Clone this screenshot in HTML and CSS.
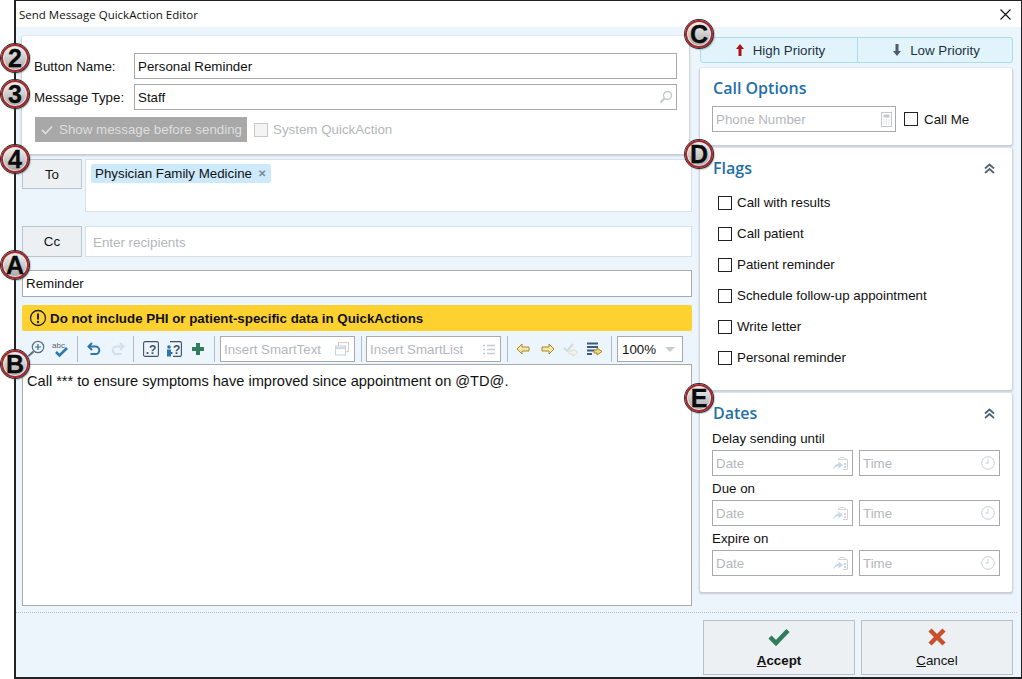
FILE: index.html

```html
<!DOCTYPE html>
<html lang="en">
<head>
    <meta charset="UTF-8">
    <title>Send Message QuickAction Editor</title>
    <link rel="stylesheet" href="styles.css">
</head>
<body>
<div class="window">
    <div class="titlebar">
        <span class="title">Send Message QuickAction Editor</span>
        <svg class="close" width="11" height="11" viewBox="0 0 11 11"><path d="M.5 .5l10 10M10.500 .5l-10 10" stroke="#111" stroke-width="1.1" fill="none"/></svg>
    </div>

    <div class="main">
        <div class="left">
            <div class="card general">
                <div class="form-row">
                    <label class="form-label">Button Name:</label>
                    <div class="input">Personal Reminder</div>
                </div>
                <div class="form-row">
                    <label class="form-label">Message Type:</label>
                    <div class="input">Staff
                        <svg class="field-icon" width="14" height="14" viewBox="0 0 14 14"><circle cx="8.5" cy="5.5" r="4" fill="none" stroke="#c4c8cc" stroke-width="1.4"/><path d="M5.5 8.5L1.5 12.5" stroke="#c4c8cc" stroke-width="2"/></svg>
                    </div>
                </div>
                <div class="options-row">
                    <div class="show-btn">
                        <svg width="12" height="10" viewBox="0 0 12 10"><path d="M1 5l3.5 3.5L11 1.5" fill="none" stroke="#dcdcdc" stroke-width="1.8"/></svg>
                        Show message before sending
                    </div>
                    <span class="check disabled"></span>
                    <span class="muted">System QuickAction</span>
                </div>
            </div>

            <div class="recipients to">
                <div class="rcp-btn">To</div>
                <div class="rcp-box">
                    <span class="chip">Physician Family Medicine <span class="chip-x">✕</span></span>
                </div>
            </div>
            <div class="recipients cc">
                <div class="rcp-btn">Cc</div>
                <div class="rcp-box placeholder">Enter recipients</div>
            </div>

            <div class="input subject">Reminder</div>

            <div class="warning">
                <svg width="18" height="18" viewBox="0 0 18 18"><circle cx="9" cy="9" r="7.5" fill="none" stroke="#222" stroke-width="1.3"/><path d="M9 4.5v6" stroke="#222" stroke-width="2"/><circle cx="9" cy="13" r="1.2" fill="#222"/></svg>
                Do not include PHI or patient-specific data in QuickActions
            </div>

            <div class="toolbar">
                <svg class="tool" width="18" height="18" viewBox="0 0 18 18"><circle cx="11" cy="7" r="5.7" fill="none" stroke="#5c6d7c" stroke-width="1.2"/><path d="M8 7h6M11 4v6" stroke="#2f6f9f" stroke-width="1.2"/><path d="M6.500 11.500L1.500 16" stroke="#5c6d7c" stroke-width="2"/></svg>
                <svg class="tool" width="17" height="17" viewBox="0 0 17 17"><text class="icon-abc" x="0" y="7">abc</text><path d="M4 11l3.500 3.500L15 7" fill="none" stroke="#2f78ad" stroke-width="2.600"/></svg>
                <span class="sep sep-a"></span>
                <svg class="tool" width="14" height="14" viewBox="0 0 14 14"><path d="M5 1L1.500 4.500 5 8" fill="none" stroke="#2a76ad" stroke-width="2"/><path d="M2 4.500h6.500a3.800 3.800 0 0 1 0 7.600H3.500" fill="none" stroke="#2a76ad" stroke-width="2"/></svg>
                <svg class="tool redo" width="14" height="14" viewBox="0 0 14 14"><path d="M9 1l3.500 3.500L9 8" fill="none" stroke="#cfe0ea" stroke-width="2"/><path d="M12 4.500H5.500a3.800 3.800 0 0 0 0 7.600H10.500" fill="none" stroke="#cfe0ea" stroke-width="2"/></svg>
                <span class="sep sep-b"></span>
                <svg class="tool" width="16" height="16" viewBox="0 0 16 16"><rect x=".6" y=".6" width="14.800" height="14.800" rx="1.500" fill="none" stroke="#3f5266" stroke-width="1.100"/><text class="icon-help" x="8" y="12.500">.?</text></svg>
                <svg class="tool" width="16" height="16" viewBox="0 0 16 16"><path d="M4 .6h10a1.500 1.500 0 0 1 1.400 1.500v11.800a1.500 1.500 0 0 1-1.400 1.500H7" fill="none" stroke="#3f5266" stroke-width="1.100"/><text class="icon-help" x="9" y="12.500">.?</text><circle cx="3" cy="6" r="1.800" fill="#2a76ad"/><rect x="1" y="8.500" width="4" height="7" fill="#2a76ad"/></svg>
                <svg class="tool plus" width="12" height="12" viewBox="0 0 12 12"><path d="M4 0h4v4h4v4H8v4H4V8H0V4h4z" fill="#2f7d5b"/></svg>
                <span class="sep sep-c"></span>
                <div class="tool-field smarttext">
                    <span class="muted">Insert SmartText</span>
                    <svg width="14" height="14" viewBox="0 0 14 14"><rect x="3.500" y=".6" width="10" height="9" fill="none" stroke="#e2c9bd"/><rect x=".6" y="4" width="10" height="9" fill="#fff" stroke="#bcd0e0"/><path d="M1 6h9" stroke="#bcd0e0" stroke-width="1.500"/></svg>
                </div>
                <span class="sep sep-d"></span>
                <div class="tool-field smartlist">
                    <span class="muted">Insert SmartList</span>
                    <svg width="12" height="11" viewBox="0 0 12 11"><path d="M0 1.500h2M4 1.500h8M0 5.500h2M4 5.500h8M0 9.500h2M4 9.500h8" stroke="#c6ccd2" stroke-width="1.500"/></svg>
                </div>
                <span class="sep sep-e"></span>
                <svg class="tool back" width="14" height="12" viewBox="0 0 14 12"><path d="M6 1L1 6l5 5V8h7V4H6z" fill="#f5e6a8" stroke="#a8892c"/></svg>
                <svg class="tool nav" width="14" height="12" viewBox="0 0 14 12"><path d="M8 1l5 5-5 5V8H1V4h7z" fill="#f5e6a8" stroke="#a8892c"/></svg>
                <svg class="tool nav" width="16" height="15" viewBox="0 0 16 15"><path d="M1 6l3 3 6-7" fill="none" stroke="#cfe0dc" stroke-width="2.200"/><path d="M10 7l4.500 3.500L10 14v-2H6V9h4z" fill="#f7f5ea" stroke="#dcdcd0"/></svg>
                <svg class="tool" width="16" height="15" viewBox="0 0 16 15"><path d="M0 1.500h11M0 5h11M0 8.500h8M0 12h5" stroke="#3c5a7c" stroke-width="2"/><path d="M10 6l5 3.500-5 3.500v-2H7V8h3z" fill="#f0d878" stroke="#a8892c"/></svg>
                <span class="sep sep-f"></span>
                <div class="tool-field zoom">
                    <span>100%</span>
                    <svg width="10" height="5" viewBox="0 0 10 5"><path d="M0 0h10L5 5z" fill="#c8ccd0"/></svg>
                </div>
            </div>

            <div class="editor">Call *** to ensure symptoms have improved since appointment on @TD@.</div>
        </div>

        <div class="right">
            <div class="priority">
                <div class="prio-btn">
                    <svg width="8" height="12" viewBox="0 0 8 12"><path d="M4 0l4 5H5.500v7h-3V5H0z" fill="#b01116"/></svg>
                    High Priority
                </div>
                <div class="prio-btn">
                    <svg width="8" height="12" viewBox="0 0 8 12"><path d="M4 12l4-5H5.500V0h-3v7H0z" fill="#4c5c6c"/></svg>
                    Low Priority
                </div>
            </div>

            <div class="card side call-options">
                <h2 class="side-title">Call Options</h2>
                <div class="call-row">
                    <div class="input phone"><span class="muted">Phone Number</span>
                        <svg class="field-icon" width="11" height="15" viewBox="0 0 11 15"><rect x=".5" y=".5" width="10" height="14" fill="none" stroke="#c4c8cc"/><rect x="2.500" y="2.500" width="6" height="3" fill="#c4c8cc"/><path d="M2.500 8h1M5 8h1M7.500 8h1M2.500 10h1M5 10h1M7.500 10h1M2.500 12h1M5 12h1M7.500 12h1" stroke="#c4c8cc"/></svg>
                    </div>
                    <span class="check"></span>
                    <span>Call Me</span>
                </div>
            </div>

            <div class="card side flags">
                <div class="side-head">
                    <h2 class="side-title">Flags</h2>
                    <svg width="11" height="11" viewBox="0 0 11 11"><path d="M1 5.500l4.500-4 4.500 4M1 10l4.500-4 4.500 4" fill="none" stroke="#4f6478" stroke-width="1.700"/></svg>
                </div>
                <div class="flag"><span class="check"></span>Call with results</div>
                <div class="flag"><span class="check"></span>Call patient</div>
                <div class="flag"><span class="check"></span>Patient reminder</div>
                <div class="flag"><span class="check"></span>Schedule follow-up appointment</div>
                <div class="flag"><span class="check"></span>Write letter</div>
                <div class="flag"><span class="check"></span>Personal reminder</div>
            </div>

            <div class="card side dates">
                <div class="side-head">
                    <h2 class="side-title">Dates</h2>
                    <svg width="11" height="11" viewBox="0 0 11 11"><path d="M1 5.500l4.500-4 4.500 4M1 10l4.500-4 4.500 4" fill="none" stroke="#4f6478" stroke-width="1.700"/></svg>
                </div>
                <div class="date-label">Delay sending until</div>
                <div class="date-row">
                    <div class="input date"><span class="muted">Date</span>
                        <svg class="field-icon" width="15" height="14" viewBox="0 0 15 14"><path d="M5 3.500h9.500v10H10M6 1.500v2M12 1.500v2M7 1.500h4" fill="none" stroke="#cfd3d6"/><path d="M11 7h2v2h-2zM11 10h2v2h-2z" fill="#cfd3d6"/><path d="M.5 13.500c0-3.500 2.500-5.500 5-5.500V5.500L10 9l-4.500 3.500V10c-2 0-3.500 1-5 3.500z" fill="#c6d8ea"/></svg>
                    </div>
                    <div class="input time"><span class="muted">Time</span>
                        <svg class="field-icon" width="14" height="14" viewBox="0 0 14 14"><circle cx="7" cy="7" r="6.300" fill="none" stroke="#c8ced2"/><path d="M7 3v4H4.500" fill="none" stroke="#c8ced2"/></svg>
                    </div>
                </div>
                <div class="date-label">Due on</div>
                <div class="date-row">
                    <div class="input date"><span class="muted">Date</span>
                        <svg class="field-icon" width="15" height="14" viewBox="0 0 15 14"><path d="M5 3.500h9.500v10H10M6 1.500v2M12 1.500v2M7 1.500h4" fill="none" stroke="#cfd3d6"/><path d="M11 7h2v2h-2zM11 10h2v2h-2z" fill="#cfd3d6"/><path d="M.5 13.500c0-3.500 2.500-5.500 5-5.500V5.500L10 9l-4.500 3.500V10c-2 0-3.500 1-5 3.500z" fill="#c6d8ea"/></svg>
                    </div>
                    <div class="input time"><span class="muted">Time</span>
                        <svg class="field-icon" width="14" height="14" viewBox="0 0 14 14"><circle cx="7" cy="7" r="6.300" fill="none" stroke="#c8ced2"/><path d="M7 3v4H4.500" fill="none" stroke="#c8ced2"/></svg>
                    </div>
                </div>
                <div class="date-label">Expire on</div>
                <div class="date-row">
                    <div class="input date"><span class="muted">Date</span>
                        <svg class="field-icon" width="15" height="14" viewBox="0 0 15 14"><path d="M5 3.500h9.500v10H10M6 1.500v2M12 1.500v2M7 1.500h4" fill="none" stroke="#cfd3d6"/><path d="M11 7h2v2h-2zM11 10h2v2h-2z" fill="#cfd3d6"/><path d="M.5 13.500c0-3.500 2.500-5.500 5-5.500V5.500L10 9l-4.500 3.500V10c-2 0-3.500 1-5 3.500z" fill="#c6d8ea"/></svg>
                    </div>
                    <div class="input time"><span class="muted">Time</span>
                        <svg class="field-icon" width="14" height="14" viewBox="0 0 14 14"><circle cx="7" cy="7" r="6.300" fill="none" stroke="#c8ced2"/><path d="M7 3v4H4.500" fill="none" stroke="#c8ced2"/></svg>
                    </div>
                </div>
            </div>
        </div>
    </div>

    <div class="footer">
        <div class="foot-btn accept">
            <svg width="22" height="18" viewBox="0 0 22 18"><path d="M2 9l6 6L20 2.500" fill="none" stroke="#2f7d5b" stroke-width="4.500"/></svg>
            <span><u>A</u>ccept</span>
        </div>
        <div class="foot-btn">
            <svg width="18" height="18" viewBox="0 0 18 18"><path d="M2 2l14 14M16 2L2 16" fill="none" stroke="#c9502f" stroke-width="4.500"/></svg>
            <span><u>C</u>ancel</span>
        </div>
    </div>
</div>

<span class="badge badge-2">2</span>
<span class="badge badge-3">3</span>
<span class="badge badge-4">4</span>
<span class="badge badge-a">A</span>
<span class="badge badge-b">B</span>
<span class="badge badge-c">C</span>
<span class="badge badge-d">D</span>
<span class="badge badge-e">E</span>
</body>
</html>
```

FILE: styles.css

```css
* {
    box-sizing: border-box;
}
body {
    font-family: "Liberation Sans", Arial, sans-serif;
    font-size: 13.33px;
    color: #111;
    background-color: #fff;
    margin: 0;
    padding: 0;
    height: 679px;
    overflow: hidden;
    position: relative;
}
svg {
    flex: none;
    display: block;
}

.window {
    margin-left: 14px;
    width: 1008px;
    height: 679px;
    border: 2px solid #222;
    border-top-width: 1px;
    border-right-width: 1px;
    background-color: #ecf4fc;
    display: flex;
    flex-direction: column;
}
.titlebar {
    height: 26px;
    background-color: #fff;
    display: flex;
    align-items: center;
    justify-content: space-between;
    padding: 0 3px 0 3px;
    flex: none;
}
.title {
    font-family: "Open Sans", sans-serif;
    font-size: 11.5px;
}
.close {
    margin-right: 7px;
}

.main {
    flex: none;
    height: 586px;
    display: flex;
    padding: 0 0 6px 6px;
    margin-right: 4px;
    border-bottom: 1px dotted #b5bcc4;
}
.left {
    width: 670px;
    display: flex;
    flex-direction: column;
    padding-top: 9px;
}
.right {
    width: 313px;
    margin-left: 8px;
    padding-top: 10px;
}

.card {
    background-color: #fff;
    box-shadow: 0 1px 2px 1px #c6ccd4;
    border-radius: 2px;
}
.general {
    width: 667px;
    height: 118px;
    flex: none;
    padding: 17px 12px 0;
}
.form-row {
    display: flex;
    align-items: center;
    margin-bottom: 5px;
}
.form-label {
    width: 100px;
}
.input {
    background-color: #fff;
    border: 1px solid #a9a9a9;
    height: 26px;
    padding: 0 3px;
    display: flex;
    align-items: center;
    justify-content: space-between;
    flex: 1;
    position: relative;
}
.muted {
    color: #b4b7bb;
}
.options-row {
    display: flex;
    align-items: center;
    margin-top: 7px;
}
.show-btn {
    width: 212px;
    height: 25px;
    background-color: #a8a8a8;
    color: #dedede;
    display: flex;
    align-items: center;
    gap: 6px;
    padding-left: 6px;
    margin-right: 7px;
    margin-left: 1px;
}
.check {
    width: 14px;
    height: 14px;
    border: 1px solid #222;
    background-color: #fff;
    flex: none;
}
.check.disabled {
    border-color: #c8c8c8;
    background-color: #f4f4f4;
    margin-right: 5px;
}

.recipients {
    display: flex;
    gap: 3px;
    flex: none;
    align-items: flex-start;
}
.recipients.to {
    margin-top: 5px;
}
.recipients.cc {
    margin-top: 14px;
}
.rcp-btn {
    width: 60px;
    height: 31px;
    background-color: #edf0f3;
    border: 1px solid #bcc4cc;
    display: flex;
    align-items: center;
    justify-content: center;
}
.to .rcp-btn {
    height: 30px;
}
.rcp-box {
    flex: 1;
    background-color: #fff;
    border: 1px solid #d8e0e8;
    padding: 4px 5px;
}
.to .rcp-box {
    height: 53px;
}
.rcp-box.placeholder {
    height: 31px;
    color: #b4b7bb;
    padding: 8px 7px 0;
}
.chip {
    display: inline-flex;
    align-items: center;
    gap: 5px;
    height: 19px;
    padding: 0 5px 0 4px;
    background-color: #cceafc;
    border-radius: 2px;
}
.chip-x {
    color: #7c8894;
    font-size: 10px;
    font-weight: bold;
    margin-left: 1px;
}

.subject {
    flex: none;
    height: 27px;
    margin-top: 13px;
}
.warning {
    height: 26px;
    margin-top: 8px;
    flex: none;
    background-color: #fdd12f;
    border-radius: 2px;
    font-weight: bold;
    display: flex;
    align-items: center;
    gap: 3px;
    padding-left: 7px;
}

.toolbar {
    display: flex;
    align-items: center;
    height: 28px;
    margin-top: 4px;
    flex: none;
    padding-left: 5px;
}
.tool {
    margin-right: 7px;
}
.icon-abc {
    font-size: 8px;
    fill: #5a6470;
}
.icon-help {
    font-size: 12px;
    font-weight: bold;
    fill: #3f5266;
    text-anchor: middle;
}
.redo {
    margin-left: 3px;
}
.plus {
    margin-left: 3px;
}
.back {
    margin-right: 11px;
}
.nav {
    margin-right: 8px;
}
.sep {
    width: 1px;
    height: 26px;
    background-color: #b4bbc2;
    flex: none;
    margin-right: 9px;
    margin-left: 1px;
}
.sep-c {
    margin-left: 3px;
    margin-right: 5px;
}
.sep-d {
    margin-left: 6px;
    margin-right: 4px;
}
.sep-e {
    margin-left: 6px;
    margin-right: 8px;
}
.sep-f {
    margin-left: 1px;
    margin-right: 5px;
}
.tool-field {
    height: 26px;
    border: 1px solid #a9a9a9;
    background-color: #fff;
    display: flex;
    align-items: center;
    justify-content: space-between;
    padding: 0 5px 0 3px;
    flex: none;
}
.smarttext {
    width: 135px;
}
.smartlist {
    width: 135px;
}
.zoom {
    width: 66px;
    padding: 0 7px 0 4px;
}
.editor {
    flex: 1;
    margin-top: 1px;
    background-color: #fff;
    border: 1px solid #a9a9a9;
    padding: 8px 4px;
    font-size: 14.6px;
}

.priority {
    display: flex;
    height: 26px;
    border: 1px solid #a9dcef;
    border-radius: 3px;
    background-color: #e1f3fb;
    color: #1f3344;
}
.prio-btn {
    display: flex;
    align-items: center;
    justify-content: center;
    gap: 9px;
    padding-left: 3px;
}
.prio-btn:first-child {
    width: 157px;
    border-right: 1px solid #a9dcef;
}
.prio-btn:last-child {
    flex: 1;
}

.side {
    width: 312px;
    padding: 0 12px;
}
.side-title {
    font-family: "Open Sans", sans-serif;
    font-size: 16px;
    font-weight: 600;
    color: #1f6fa8;
    margin: 0;
    line-height: 22px;
}
.side-head {
    display: flex;
    justify-content: space-between;
    align-items: center;
    padding-right: 5px;
}
.call-options {
    height: 77px;
    margin-top: 5px;
    padding-top: 9px;
}
.call-options .side-title {
    margin-left: 1px;
}
.call-row {
    display: flex;
    align-items: center;
    margin-top: 7px;
}
.phone {
    flex: none;
    width: 184px;
    margin-right: 8px;
}
.call-row .check {
    margin-right: 6px;
}
.flags {
    height: 242px;
    margin-top: 3px;
    padding-top: 9px;
}
.side-head .side-title {
    margin-left: 1px;
}
.flag {
    display: flex;
    align-items: center;
    height: 31px;
    padding-left: 6px;
    gap: 5px;
}
.flags .side-head {
    margin-bottom: 8px;
}
.dates {
    height: 199px;
    margin-top: 3px;
    padding-top: 9px;
}
.date-label {
    height: 24px;
    display: flex;
    align-items: center;
}
.dates .side-head + .date-label {
    height: 26px;
    padding-top: 3px;
}
.date-row {
    display: flex;
    gap: 6px;
}
.date-row .input {
    flex: none;
    width: 141px;
    padding-right: 4px;
}

.footer {
    flex: 1;
    display: flex;
    justify-content: flex-end;
    gap: 6px;
    padding: 7px 8px 0 0;
}
.foot-btn {
    width: 152px;
    height: 55px;
    background-color: #ecf0f3;
    border: 1px solid #b8c0c8;
    display: flex;
    flex-direction: column;
    align-items: center;
    justify-content: center;
    gap: 7px;
}
.accept {
    font-weight: bold;
}

.badge {
    position: absolute;
    width: 28px;
    height: 28px;
    border-radius: 50%;
    border: 2px solid #a8252c;
    box-shadow: 0 0 0 1px #2c2c2c, 1px 1px 2px #555, inset 0 0 0 1px #e4e4e4;
    background: linear-gradient(#f2f2f2, #a8a8a8);
    color: #0c0c0c;
    font-family: "Liberation Sans", sans-serif;
    font-size: 25px;
    font-weight: bold;
    line-height: 24px;
    text-align: center;
    -webkit-text-stroke: 0.3px #0c0c0c;
}
.badge-2 { left: 1px; top: 44px; }
.badge-3 { left: 1px; top: 80px; }
.badge-4 { left: 1px; top: 145px; }
.badge-a { left: 1px; top: 251px; }
.badge-b { left: 1px; top: 350px; }
.badge-c { left: 685px; top: 20px; }
.badge-d { left: 685px; top: 140px; }
.badge-e { left: 685px; top: 384px; }
```
